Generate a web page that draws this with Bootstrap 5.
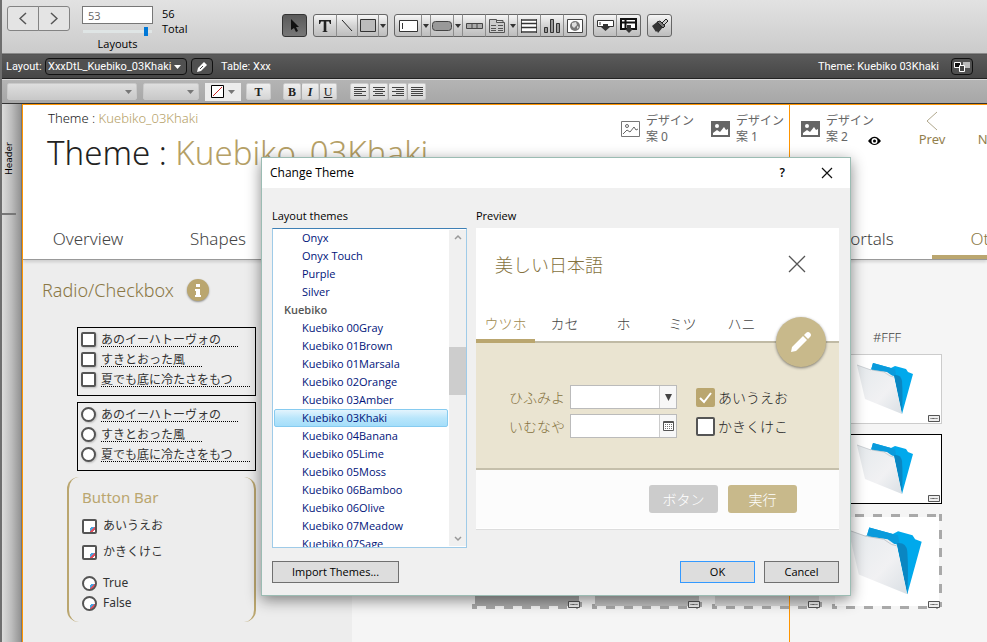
<!DOCTYPE html>
<html lang="ja">
<head>
<meta charset="utf-8">
<meta name="viewport" content="width=device-width, initial-scale=1">
<title>Layout – Change Theme</title>
<link href="https://cdn.jsdelivr.net/npm/bootstrap@5.3.0/dist/css/bootstrap.min.css" rel="stylesheet">
<style>
body{font-family:"Open Sans","Noto Sans CJK JP",sans-serif;font-size:11px;line-height:16px;color:#000;background:#f5f5f5;border-left:2px solid #6e6e6e;overflow:hidden}
svg{display:block}
select,.flat-input{appearance:none;background-repeat:no-repeat}
.canvas-font{font-family:"Noto Sans","Noto Sans CJK JP",sans-serif}
/* top toolbar */
.top-tools{height:54px;background:linear-gradient(#e2e2e2,#cbcbcb);border-bottom:1px solid #8a8a8a;padding:6px 0 0 5px}
.nav-pair{margin-right:12px}
.nav-pair .btn{width:32px;height:25px;padding:0;border:1px solid #838383;background:#e4e4e4;border-radius:3px}
.record-col{width:71px;margin-right:9px}
.record-input{width:71px;height:18px;border:1px solid #777;background:#fff;padding:0 5px;color:#666}
.record-range{appearance:none;width:69px;height:10px;margin:2px 1px 0;background:linear-gradient(#dfe5e5,#dfe5e5) center/100% 3px no-repeat}
.record-range::-webkit-slider-thumb{appearance:none;width:4px;height:9px;background:#0078d7;border-radius:0}
.total-col{width:120px;line-height:15px}
.tool-row{gap:6px;padding-top:8px}
.tool-set .btn,.tool-one{height:23px;padding:0;border:1px solid #666;background:linear-gradient(#f6f6f6,#d4d4d4 50%,#bdbdbd);border-radius:3px;display:flex;align-items:center;justify-content:center}
.tool-set .btn+.btn{border-left-color:#8d8d8d}
.tool-one{width:25px}
.tool-one.pressed{background:linear-gradient(#5a5a5a,#777);border-color:#333}
.w-a{width:24px}.w-b{width:22px}.w-c{width:10px}.w-d{width:28px}.w-e{width:25px}
/* dark layout bar */
.layout-bar{font-family:Roboto,sans-serif;height:25px;background:linear-gradient(#5a5a5a,#464646);color:#fff;border-top:1px solid #555;border-bottom:1px solid #222;padding:0 14px 0 4px}
.bar-label{width:39px}
.layout-select{width:142px;height:17px;border:1px solid #111;border-radius:4px;color:#fff;font-size:11px;line-height:14px;padding:0 2px;background:#505050 url("data:image/svg+xml,%3Csvg xmlns='http://www.w3.org/2000/svg' width='7' height='4'%3E%3Cpath d='M0 0h7L3.500 4z' fill='white'/%3E%3C/svg%3E") no-repeat right 5px center}
.dark-btn{width:22px;height:17px;padding:0;border:1px solid #111;border-radius:4px;background:#505050;display:flex;align-items:center;justify-content:center}
/* format bar */
.format-bar{height:25px;background:linear-gradient(#b4b4b4,#a7a7a7);border-top:1px solid #d8d8d8;border-bottom:1px solid #333;padding:0 5px}
.format-select{height:17px;border:1px solid #c9c9c9;border-radius:2px;margin-right:6px;background:url("data:image/svg+xml,%3Csvg xmlns='http://www.w3.org/2000/svg' width='7' height='4'%3E%3Cpath d='M0 0h7L3.500 4z' fill='%23777'/%3E%3C/svg%3E") no-repeat right 4px center,linear-gradient(#dedede,#c9c9c9)}
.font-pick{width:130px}
.size-pick{width:56px}
.tri{width:7px;height:4px;fill:#777}
.fill-btn{width:36px;height:18px;padding:0;border:0;border-radius:0;background:#ececec}
.format-btn{width:18px;height:17px;padding:0;border:1px solid #ccc;border-radius:2px;background:linear-gradient(#efefef,#d5d5d5);font:12px/14px "Liberation Serif",serif;color:#222;display:flex;align-items:center;justify-content:center}
.format-btn+.format-btn{border-left-color:#aaa}
.wide-t{width:25px;margin:0 12px 0 5px}
.align-set{margin-left:13px}
.align-set .btn{width:19px}
/* workspace */
.ruler{width:20px;background:linear-gradient(90deg,#dcdcdb,#bdbdbd 50%,#929292);border-right:1px solid #777}
.ruler-part{height:111px;writing-mode:vertical-rl;transform:rotate(180deg);font:9px/14px "DejaVu Sans",sans-serif;border-top:2px solid #777}
.canvas{border-top:1px solid #ff9500;border-left:1px solid #ff9500}
.page-guide{position:absolute;left:766px;top:0;bottom:0;width:1px;background:#ff9500}
.canvas-head{height:155px;background:#fff;border-bottom:1px solid #999;box-shadow:0 2px 3px #0002;position:relative}
.khaki{color:#b5a066}
.dark-khaki{color:#8a7744}
.head-small{font-size:13px;line-height:18px;padding:4px 0 0 25px;color:#222;font-weight:300}
.head-big{font-size:33px;line-height:44px;padding-left:24px;color:#222;white-space:nowrap;margin:4px 0 0;font-weight:300}
.tab-strip{position:absolute;left:0;right:0;bottom:0;overflow:hidden;font-size:17px;line-height:32px;font-weight:300}
.tab-strip a{width:130px;flex:none;text-align:center;color:#444;text-decoration:none;border-bottom:4px solid transparent}
.tab-strip .current{color:#8a7744;border-bottom-color:#baa66f}
.tab-gap{width:519px;flex:none}
.design-row{position:absolute;left:598px;top:6px;color:#666;font-size:12px;line-height:16px;white-space:nowrap}
.design-item{width:90px;gap:6px}
.eye-mark{position:absolute;left:247px;top:25px}
.pager-link{color:#93804d;text-decoration:none;width:60px;text-align:center;font-size:13px}
.first-pager{margin-left:11px}
.left-panel{width:329px;background:#ededed;padding:16px 0 0 19px;color:#333}
.panel-title{font-size:18px;line-height:28px;gap:13px;font-weight:300}
.info-badge{width:22px;height:22px;border-radius:50%;background:#baa66f;box-shadow:0 1px 2px #0006}
.choice-box{width:179px;height:69px;border:1px solid #000;margin:0 0 6px 35px;padding:1px 0 0 3px;font-size:12px}
.choice-box.first-box{margin-top:23px}
.choice{height:20px;gap:5px}
.choice input,.bar-choice input{appearance:none;width:15px;height:15px;border:2px solid #555;border-radius:2px;background:#fff;margin:0;flex:none}
.choice input{box-shadow:1px 1px 2px #0003}
.choice input[type=radio],.bar-choice input[type=radio]{border-radius:50%}
.choice label{border-bottom:1px dotted #000;line-height:16px;height:15px;padding-right:17px;white-space:nowrap}
.button-bar{width:189px;height:145px;margin:1px 0 0 25px;border:0 solid #baa66f;border-width:0 2px;border-radius:12px;padding:8px 0 0 13px;font-size:12px}
.bar-title{font-size:15px;line-height:24px;color:#baa66f}
.bar-choice{gap:6px;height:26px}
.bar-choice.tight{height:20px}
.bar-choice input{background:#fff linear-gradient(135deg,transparent 15%,#4aa3df 15% 45%,#e0505f 45% 75%,transparent 75%) 6px 6px/5px 5px no-repeat}
.right-panel{padding:0 45px 33px 0;gap:10px}
.box-column{width:110px}
.hex-label{font-size:13px;line-height:18px;color:#444;text-align:center;margin-bottom:8px;font-weight:300}
.folder-box{height:70px;background:#fff;border:1px solid #ccc;margin-bottom:10px;position:relative}
.folder-box.ink{border-color:#000}
.folder-box.dashed{height:95px;border:0;margin:0;background:linear-gradient(#fff,#fff) center/104px 89px no-repeat,repeating-linear-gradient(90deg,#a9a9a9 0 9px,transparent 9px 18px) 5px 0/100% 3px no-repeat,repeating-linear-gradient(90deg,#a9a9a9 0 9px,transparent 9px 18px) -4px 100%/100% 3px no-repeat,repeating-linear-gradient(#a9a9a9 0 9px,transparent 9px 18px) 100% -2px/3px 100% no-repeat,repeating-linear-gradient(#a9a9a9 0 9px,transparent 9px 18px) 0 0/3px 100% no-repeat}
.shade-a,.shade-b,.shade-c{background:#aaa;position:absolute;inset:3px}
.shade-b{background:#c0c0c0}.shade-c{background:#d8d8d8}
.folder-box>.folder-art{margin-right:4px}
.field-badge{position:absolute;right:1px;bottom:1px}
.dashed .field-badge{right:2px}
/* dialog window */
.theme-window{position:absolute;left:261px;top:157px;width:590px;height:439px;background:#f0f0f0;border:1px solid #9bbcb3;box-shadow:0 4px 14px #0007}
.title-row{height:30px;background:#fff;padding:0 17px 0 8px;font-size:12px}
.plain-btn{border:0;background:none;padding:0;color:#000}
.help-btn{font-weight:600;margin-right:36px}
.window-body{padding:20px 11px 0 10px}
.list-col{width:195px;margin-right:9px}
.col-label{line-height:16px;margin-bottom:4px;font-size:11px}
.theme-list{height:320px;border:1px solid #9fcbe8;border-top:1px solid #3f80b5;background:#fff;overflow:hidden}
.name-list{padding-left:1px}
.theme-list .list-group-item{height:18px;padding:0 0 0 27px;border:1px solid transparent;background:none;color:#00147a;font-size:11px;line-height:16px;border-radius:2px;width:174px}
.theme-list .group-name{padding-left:9px;color:#555;font-weight:600}
.theme-list .list-group-item.chosen{border-color:#86cbf0;background:linear-gradient(#e3f4fd,#b9e6fb 50%,#a4defa)}
.scroll-lane{width:17px;background:#f0f0f0;margin:1px}
.scroll-thumb{height:48px;background:#cdcdcd;margin-top:107px}
.bottom-row{margin-top:13px}
.win-btn{height:22px;border:1px solid #707070;background:#dddddd;border-radius:0;font-size:11px;line-height:18px;padding:0;color:#000;width:75px}
.win-btn.import{width:127px}
.win-btn.default{border-color:#3399ff;margin-right:9px}
.preview{background:#fff;font-family:"Noto Sans CJK JP",sans-serif;position:relative;height:302px;border-bottom:1px solid #ddd}
.pv-head{height:115px;border-bottom:2px solid #c0baa5;position:relative}
.pv-title{font-size:18px;line-height:28px;padding:22px 33px 0 19px;color:#85723e;font-weight:300}
.pv-tabs{position:absolute;left:0;bottom:-2px;font-size:14px;line-height:28px;font-weight:300}
.pv-tabs a{width:59px;color:#444;text-decoration:none;text-align:center;padding-bottom:2px;border-bottom:4px solid transparent}
.pv-tabs .current{color:#a08a4e;border-bottom-color:#baa66f}
.fab{position:absolute;right:13px;top:89px;width:50px;height:50px;border-radius:50%;background:#c8b98b;border:0;box-shadow:0 1px 3px #0007;padding:0;display:flex;align-items:center;justify-content:center}
.pv-body{height:127px;background:#eae4d1;border-bottom:2px solid #c5bfab;padding:42px 0 0 33px;font-size:14px;font-weight:300;gap:19px}
.pv-line{height:24px;gap:5px;margin-bottom:5px;color:#85723e}
.pv-field{width:107px;height:24px;border:1px solid #bbb;background:#fff;color:#333}
.flat-input{border:0;min-width:0;width:88px;background:none;padding:0}
.field-end{width:17px;border:0;border-left:1px solid #ccc;padding:0;background:#f7f7f7;display:flex;align-items:center;justify-content:center}
.pv-check{height:24px;gap:3px;margin-bottom:5px;color:#222}
.pv-check input{appearance:none;width:19px;height:19px;border:2px solid #555;border-radius:2px;margin:0;background:#fff}
.pv-check input:checked{border-color:#baa66f;background:#baa66f url("data:image/svg+xml,%3Csvg xmlns='http://www.w3.org/2000/svg' width='15' height='15'%3E%3Cpath d='M2 8l4 4L13 3' stroke='white' stroke-width='2' fill='none'/%3E%3C/svg%3E") center no-repeat}
.pv-foot{gap:10px;background:#fcfcfc;height:58px;padding:15px 42px 0 0}
.pv-foot button{width:69px;height:28px;padding:0;border:0;border-radius:3px;background:#ccc;color:#fff;font-size:14px;line-height:26px;font-weight:300}
.pv-foot .go{background:#c8b98b}
</style>
<script src="https://cdn.jsdelivr.net/npm/bootstrap@5.3.0/dist/js/bootstrap.bundle.min.js"></script>
</head>
<body class="d-flex flex-column vh-100 m-0">
<svg width="0" height="0" class="position-absolute" aria-hidden="true">
  <defs>
    <linearGradient id="paper" x1="0" y1="0" x2="1" y2="1"><stop offset="0" stop-color="#e4e9ec"/><stop offset=".6" stop-color="#f1f1f3"/><stop offset="1" stop-color="#d9dfe4"/></linearGradient>
    <symbol id="folder" viewBox="0 0 58 54">
      <path d="M15 8l2-7 18 5 4-2 11 3 2 3 5 2L46 52 38 14z" fill="#00a9ec"/>
      <path d="M15 8l2-7 18 5 4 1 1 6-8 1-6-4-12-3z" fill="#0a9bdc"/>
      <path d="M38 13q7-1 8 6 1 14 0 33z" fill="#0a86c2"/>
      <path d="M1 3l15 5 15 2 7 5 8 37L9 37z" fill="url(#paper)"/>
      <path d="M1 3l14 5 1-1M16 8l12 2 6 4 4 1" fill="none" stroke="#b9bec2" stroke-width=".6"/>
    </symbol>
    <symbol id="badge" viewBox="0 0 12 7"><path d="M.5.5h11v6H.5z" fill="#eee" stroke="#555"/><path d="M2.500 3.500h7" stroke="#555" stroke-dasharray="1 .3"/></symbol>
    <symbol id="photo" viewBox="0 0 19 16"><path d="M0 0h19v16H0z" fill="#666"/><circle cx="6" cy="5" r="2" fill="#fff"/><path d="M2 14V12l4-3 3 2 4-5 2 3 2-1v6z" fill="#fff"/></symbol>
    <symbol id="down" viewBox="0 0 6 4"><path d="M0 0h6L3 4z" fill="#333"/></symbol>
  </defs>
</svg>

<header class="top-tools d-flex align-items-start flex-shrink-0">
  <div class="btn-group nav-pair">
    <button class="btn" aria-label="Previous layout"><svg class="mx-auto" width="8" height="13" fill="none" stroke="#555" stroke-width="1.500"><path d="M7 1L1 6.500 7 12"/></svg></button>
    <button class="btn" aria-label="Next layout"><svg class="mx-auto" width="8" height="13" fill="none" stroke="#555" stroke-width="1.500"><path d="M1 1l6 5.500L1 12"/></svg></button>
  </div>
  <div class="record-col d-flex flex-column">
    <input class="record-input" aria-label="Layout number" value="53">
    <input class="record-range" type="range" min="1" max="56" value="53" aria-label="Layouts slider">
    <span class="text-center">Layouts</span>
  </div>
  <div class="total-col">56<br>Total</div>
  <div class="tool-row d-flex">
    <button class="btn tool-one pressed" aria-label="Select"><svg width="12" height="15"><path d="M2 1l8 8H7l2 4-2 1-2-4-3 2z" fill="#111"/></svg></button>
    <div class="btn-group tool-set">
      <button class="btn w-a" aria-label="Text"><svg width="14" height="14"><path d="M1 1h12v4h-1l-1-2.500H8.300V12l1.700 1H4l1.700-1V2.500H3L2 5H1z" fill="#222"/></svg></button>
      <button class="btn w-b" aria-label="Line"><svg width="12" height="13"><path d="M1 1l10 11" stroke="#222"/></svg></button>
      <button class="btn w-b" aria-label="Rectangle"><svg width="16" height="13"><path d="M.5.5h15v12H.5z" fill="#bbb" stroke="#333"/></svg></button>
      <button class="btn w-c" aria-label="More shapes"><svg width="6" height="4"><use href="#down"/></svg></button>
    </div>
    <div class="btn-group tool-set">
      <button class="btn w-d" aria-label="Field"><svg width="19" height="12"><path d="M.5.5h18v11H.5z" fill="#fff" stroke="#333"/><path d="M3.500 3v6" stroke="#333"/></svg></button>
      <button class="btn w-c" aria-label="Field options"><svg width="6" height="4"><use href="#down"/></svg></button>
      <button class="btn w-a" aria-label="Button"><svg width="20" height="10"><rect x=".5" y=".5" width="19" height="9" rx="3" fill="#999" stroke="#444"/></svg></button>
      <button class="btn w-c" aria-label="Button options"><svg width="6" height="4"><use href="#down"/></svg></button>
      <button class="btn w-a" aria-label="Button bar"><svg width="17" height="6"><path d="M.5.500h16v5H.5zM6 0v6M11 0v6" fill="#aaa" stroke="#444"/></svg></button>
      <button class="btn w-a" aria-label="Tab control"><svg width="16" height="14" fill="#ccc" stroke="#555"><path d="M.5 13.500V.5h7v3h8v10zM8 1.500h6v2"/><path d="M2 6.500h5M9 6.500h5M2 9.500h5M9 9.500h5M2 11.500h5M9 11.500h5"/></svg></button>
      <button class="btn w-c" aria-label="Tab options"><svg width="6" height="4"><use href="#down"/></svg></button>
      <button class="btn w-a" aria-label="Portal"><svg width="16" height="14"><path d="M0 0h16v14H0z" fill="#fff"/><path d="M.5 0v14M15.500 0v14" stroke="#555"/><path d="M0 1h16M0 4.500h16M0 8.500h16M0 13h16" stroke="#333" stroke-width="1.500"/></svg></button>
      <button class="btn w-a" aria-label="Chart"><svg width="16" height="14" fill="#999" stroke="#333"><path d="M.5 8.500h3v5h-3zM6.500.5h3v13h-3zM12.500 4.500h3v9h-3z"/></svg></button>
      <button class="btn w-a" aria-label="Web viewer"><svg width="16" height="14"><path d="M.5.5h15v13H.5z" fill="#fff" stroke="#444"/><circle cx="8" cy="7" r="5" fill="#777"/><path d="M5 4l4-1 1 3-3 3-2-2zM10 7l2 1-2 2z" fill="#ddd"/></svg></button>
    </div>
    <div class="btn-group tool-set">
      <button class="btn w-a" aria-label="Field from picker"><svg width="17" height="15"><path d="M.5 2.500h16v6H.5z" fill="#fff" stroke="#333"/><path d="M3 4v3" stroke="#333"/><path d="M6 6h5v3h2l-4.500 4L4 9h2z" fill="#333"/></svg></button>
      <button class="btn w-e" aria-label="Part"><svg width="17" height="16"><path d="M1 1h15v10H1z" fill="#fff" stroke="#111" stroke-width="2"/><path d="M1 4.500h15M5.500 1v10" stroke="#111" stroke-width="2"/><path d="M7 7h4v4h2l-4 4-4-4h2z" fill="#333"/></svg></button>
    </div>
    <button class="btn tool-one" aria-label="Format painter"><svg width="18" height="16"><path d="M1 8l5-4 6 5-5 6-1-2-1 1z" fill="#333"/><path d="M6 4l3-1 5 5-2 2z" fill="#777" stroke="#222"/><path d="M11 5l4-4 2 2-4 4z" fill="#ccc" stroke="#222"/></svg></button>
  </div>
</header>

<div class="layout-bar d-flex align-items-center flex-shrink-0">
  <label for="layoutPick" class="bar-label">Layout:</label>
  <select id="layoutPick" class="layout-select"><option>XxxDtL_Kuebiko_03Khaki</option></select>
  <button class="btn dark-btn mx-1 me-2" aria-label="Edit layout"><svg width="12" height="12"><path d="M1 11l1-4 6-6 3 3-6 6z" fill="#fff"/><path d="M4 8l3-3" stroke="#444"/></svg></button>
  <span>Table: Xxx</span>
  <span class="ms-auto me-2">Theme: Kuebiko 03Khaki</span>
  <button class="btn dark-btn ms-1" aria-label="Change theme"><svg width="16" height="10"><path d="M.5.5h6v5h-6z" fill="#111" stroke="#fff"/><path d="M9 0h7v6H9z" fill="#bbb"/><path d="M5.500 3.500h5v6h-5z" fill="#444" stroke="#fff"/></svg></button>
</div>

<div class="format-bar d-flex align-items-center flex-shrink-0">
  <select class="format-select font-pick" aria-label="Font"></select>
  <select class="format-select size-pick" aria-label="Size"></select>
  <button class="btn fill-btn d-flex align-items-center justify-content-center gap-1" aria-label="Text color"><svg width="13" height="13"><path d="M.5.5h12v12H.5z" fill="#fff" stroke="#000"/><path d="M2 11l9-9" stroke="#c22"/></svg><svg class="tri"><path d="M0 0h7L3.500 4z"/></svg></button>
  <button class="btn format-btn wide-t fw-bold" aria-label="Text style">T</button>
  <div class="d-flex">
    <button class="btn format-btn fw-bold" aria-label="Bold">B</button><button class="btn format-btn fst-italic fw-bold" aria-label="Italic">I</button><button class="btn format-btn text-decoration-underline" aria-label="Underline">U</button>
  </div>
  <div class="d-flex align-set">
    <button class="btn format-btn" aria-label="Align left"><svg width="12" height="9" stroke="#444"><path d="M0 .5h12M0 2.500h8M0 4.500h12M0 6.500h8M0 8.500h12"/></svg></button><button class="btn format-btn" aria-label="Center"><svg width="12" height="9" stroke="#444"><path d="M0 .5h12M2 2.500h8M0 4.500h12M2 6.500h8M0 8.500h12"/></svg></button><button class="btn format-btn" aria-label="Align right"><svg width="12" height="9" stroke="#444"><path d="M0 .5h12M4 2.500h8M0 4.500h12M4 6.500h8M0 8.500h12"/></svg></button><button class="btn format-btn" aria-label="Justify"><svg width="12" height="9" stroke="#444"><path d="M0 .5h12M0 2.500h12M0 4.500h12M0 6.500h12M0 8.500h12"/></svg></button>
  </div>
</div>

<main class="d-flex flex-grow-1 overflow-hidden canvas-font">
  <aside class="ruler flex-shrink-0"><div class="ruler-part d-flex align-items-center justify-content-center">Header</div></aside>
  <div class="canvas flex-grow-1 d-flex flex-column position-relative overflow-hidden">
    <section class="canvas-head flex-shrink-0">
      <div class="head-small">Theme : <span class="khaki">Kuebiko_03Khaki</span></div>
      <h1 class="head-big">Theme : <span class="khaki">Kuebiko_03Khaki</span></h1>
      <div class="design-row d-flex">
        <div class="design-item d-flex align-items-center"><svg width="19" height="16"><path d="M.5.5h18v15H.5z" fill="#fff" stroke="#777"/><circle cx="6" cy="5" r="1.500" fill="none" stroke="#666"/><path d="M2 13l4-4 3 2 4-5 2 3 2-1" fill="none" stroke="#666"/></svg><span>デザイン<br>案 0</span></div>
        <div class="design-item d-flex align-items-center"><svg width="19" height="16"><use href="#photo"/></svg><span>デザイン<br>案 1</span></div>
        <div class="design-item d-flex align-items-center"><svg width="19" height="16"><use href="#photo"/></svg><span>デザイン<br>案 2</span></div>
        <svg class="eye-mark" width="13" height="10"><path d="M0 5Q6.500-3.500 13 5 6.500 13 0 5z" fill="#000"/><circle cx="6.500" cy="5" r="3" fill="#fff"/><circle cx="6.500" cy="5" r="1.500" fill="#000"/></svg>
        <a href="#" class="pager-link first-pager"><svg class="mx-auto" width="12" height="20"><path d="M11 1L1 10l10 9" fill="none" stroke="#b0a78c"/></svg>Prev</a>
        <a href="#" class="pager-link"><svg class="mx-auto" width="12" height="20"></svg>Next</a>
      </div>
      <nav class="tab-strip d-flex"><a href="#">Overview</a><a href="#">Shapes</a><span class="tab-gap"></span><a href="#">Portals</a><a href="#" class="current">Others</a></nav>
    </section>
    <div class="d-flex flex-grow-1">
      <section class="left-panel flex-shrink-0">
        <div class="panel-title d-flex align-items-center dark-khaki">Radio/Checkbox <span class="info-badge d-flex align-items-center justify-content-center"><svg width="6" height="13" fill="#fff"><path d="M1 0h4v3H1zM0 5h5v6h1v2H0v-2h1V7H0z"/></svg></span></div>
        <div class="choice-box first-box">
          <div class="choice d-flex align-items-center"><input type="checkbox" id="c1"><label for="c1">あのイーハトーヴォの</label></div>
          <div class="choice d-flex align-items-center"><input type="checkbox" id="c2"><label for="c2">すきとおった風</label></div>
          <div class="choice d-flex align-items-center"><input type="checkbox" id="c3"><label for="c3">夏でも底に冷たさをもつ</label></div>
        </div>
        <div class="choice-box">
          <div class="choice d-flex align-items-center"><input type="radio" name="r" id="r1"><label for="r1">あのイーハトーヴォの</label></div>
          <div class="choice d-flex align-items-center"><input type="radio" name="r" id="r2"><label for="r2">すきとおった風</label></div>
          <div class="choice d-flex align-items-center"><input type="radio" name="r" id="r3"><label for="r3">夏でも底に冷たさをもつ</label></div>
        </div>
        <div class="button-bar">
          <div class="bar-title">Button Bar</div>
          <div class="bar-choice d-flex align-items-center mt-1"><input type="checkbox" id="b1"><label for="b1">あいうえお</label></div>
          <div class="bar-choice d-flex align-items-center mb-2"><input type="checkbox" id="b2"><label for="b2">かきくけこ</label></div>
          <div class="bar-choice tight d-flex align-items-center"><input type="radio" name="t" id="t1"><label for="t1">True</label></div>
          <div class="bar-choice tight d-flex align-items-center"><input type="radio" name="t" id="t2"><label for="t2">False</label></div>
        </div>
      </section>
      <section class="right-panel flex-grow-1 d-flex align-items-end justify-content-end">
        <div class="box-column"><div class="folder-box dashed"><div class="shade-a"></div><svg class="field-badge" width="12" height="7"><use href="#badge"/></svg></div></div>
        <div class="box-column"><div class="folder-box dashed"><div class="shade-b"></div><svg class="field-badge" width="12" height="7"><use href="#badge"/></svg></div></div>
        <div class="box-column"><div class="folder-box dashed"><div class="shade-c"></div><svg class="field-badge" width="12" height="7"><use href="#badge"/></svg></div></div>
        <div class="box-column">
          <div class="hex-label">#FFF</div>
          <div class="folder-box d-flex align-items-center justify-content-center"><svg class="folder-art" width="58" height="54"><use href="#folder"/></svg><svg class="field-badge" width="12" height="7"><use href="#badge"/></svg></div>
          <div class="folder-box ink d-flex align-items-center justify-content-center"><svg class="folder-art" width="58" height="54"><use href="#folder"/></svg><svg class="field-badge" width="12" height="7"><use href="#badge"/></svg></div>
          <div class="folder-box dashed d-flex align-items-center justify-content-center"><svg class="folder-art" width="76" height="71"><use href="#folder"/></svg><svg class="field-badge" width="12" height="7"><use href="#badge"/></svg></div>
        </div>
      </section>
    </div>
    <div class="page-guide"></div>
  </div>
</main>

<div class="theme-window" role="dialog" aria-labelledby="dlgTitle">
  <div class="title-row d-flex align-items-center"><span id="dlgTitle" class="me-auto">Change Theme</span><button class="plain-btn help-btn">?</button><button class="plain-btn" aria-label="Close"><svg width="12" height="12"><path d="M1 1l10 10M11 1L1 11" stroke="#111" stroke-width="1.200"/></svg></button></div>
  <div class="window-body">
    <div class="d-flex">
      <div class="list-col">
        <div class="col-label">Layout themes</div>
        <div class="theme-list d-flex">
          <div class="list-group list-group-flush flex-grow-1 name-list">
            <button class="list-group-item text-start">Onyx</button>
            <button class="list-group-item text-start">Onyx Touch</button>
            <button class="list-group-item text-start">Purple</button>
            <button class="list-group-item text-start">Silver</button>
            <div class="list-group-item group-name">Kuebiko</div>
            <button class="list-group-item text-start">Kuebiko 00Gray</button>
            <button class="list-group-item text-start">Kuebiko 01Brown</button>
            <button class="list-group-item text-start">Kuebiko 01Marsala</button>
            <button class="list-group-item text-start">Kuebiko 02Orange</button>
            <button class="list-group-item text-start">Kuebiko 03Amber</button>
            <button class="list-group-item text-start chosen" aria-current="true">Kuebiko 03Khaki</button>
            <button class="list-group-item text-start">Kuebiko 04Banana</button>
            <button class="list-group-item text-start">Kuebiko 05Lime</button>
            <button class="list-group-item text-start">Kuebiko 05Moss</button>
            <button class="list-group-item text-start">Kuebiko 06Bamboo</button>
            <button class="list-group-item text-start">Kuebiko 06Olive</button>
            <button class="list-group-item text-start">Kuebiko 07Meadow</button>
            <button class="list-group-item text-start">Kuebiko 07Sage</button>
          </div>
          <div class="scroll-lane d-flex flex-column flex-shrink-0"><svg class="mx-auto mt-1 flex-shrink-0" width="8" height="6"><path d="M1 5l3-3 3 3" fill="none" stroke="#999" stroke-width="1.500"/></svg><div class="scroll-thumb"></div><svg class="mx-auto mt-auto mb-1 flex-shrink-0" width="8" height="6"><path d="M1 1l3 3 3-3" fill="none" stroke="#999" stroke-width="1.500"/></svg></div>
        </div>
      </div>
      <div class="flex-grow-1">
        <div class="col-label">Preview</div>
        <div class="preview">
          <div class="pv-head">
            <div class="pv-title d-flex align-items-center justify-content-between"><span>美しい日本語</span><svg width="18" height="18"><path d="M1 1l16 16M17 1L1 17" stroke="#555" stroke-width="1.300"/></svg></div>
            <nav class="pv-tabs d-flex"><a href="#" class="current">ウツホ</a><a href="#">カセ</a><a href="#">ホ</a><a href="#">ミツ</a><a href="#">ハニ</a></nav>
          </div>
          <div class="pv-body d-flex align-items-start">
            <div>
              <div class="pv-line d-flex align-items-center"><label for="f1">ひふみよ</label><div class="pv-field d-flex"><input id="f1" class="flat-input"><button class="field-end" aria-label="Open list"><svg width="7" height="7"><path d="M0 0h7L3.500 7z" fill="#444"/></svg></button></div></div>
              <div class="pv-line d-flex align-items-center"><label for="f2">いむなや</label><div class="pv-field d-flex"><input id="f2" class="flat-input"><button class="field-end" aria-label="Open calendar"><svg width="11" height="10"><path d="M.5.5h10v9H.5z" fill="#fff" stroke="#555"/><path d="M0 1.500h11" stroke="#555"/><path d="M2 3.500h7M2 5.500h7M2 7.500h7" stroke="#777" stroke-dasharray="1 1"/></svg></button></div></div>
            </div>
            <div>
              <div class="pv-check d-flex align-items-center"><input type="checkbox" id="p1" checked><label for="p1">あいうえお</label></div>
              <div class="pv-check d-flex align-items-center"><input type="checkbox" id="p2"><label for="p2">かきくけこ</label></div>
            </div>
          </div>
          <div class="pv-foot d-flex justify-content-end"><button>ボタン</button><button class="go">実行</button></div>
          <button class="fab" aria-label="Edit"><svg width="22" height="22" fill="#fff"><path d="M1 21l1-5L13 5l4 4L6 20zM14 4l2-2q2-2 4 0t0 4l-2 2z"/></svg></button>
        </div>
      </div>
    </div>
    <div class="d-flex bottom-row"><button class="btn win-btn import me-auto">Import Themes...</button><button class="btn win-btn default">OK</button><button class="btn win-btn">Cancel</button></div>
  </div>
</div>
</body>
</html>
